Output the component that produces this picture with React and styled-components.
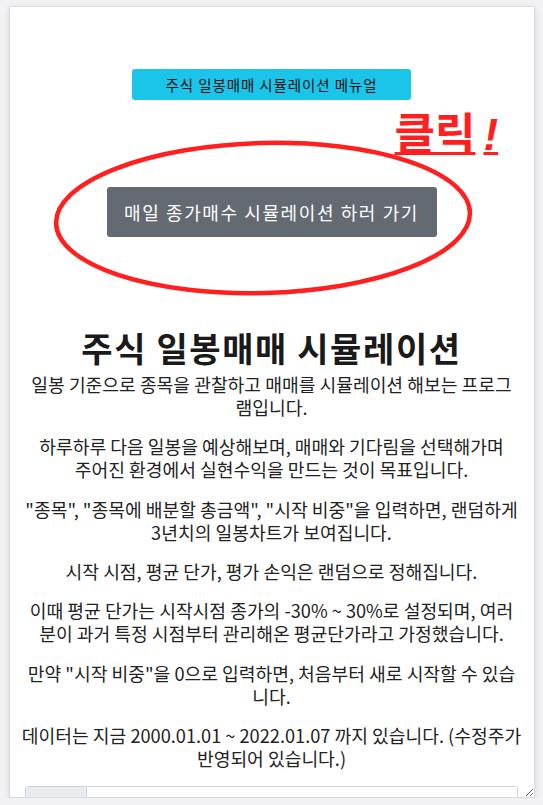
import React from "react";
import styled, { createGlobalStyle } from "styled-components";

const GlobalStyle = createGlobalStyle`
  html, body {
    margin: 0;
    padding: 0;
    background: #f2f2f4;
  }
  body {
    font-family: "Noto Sans CJK KR", "Noto Sans", sans-serif;
    color: #212529;
  }
  * {
    box-sizing: border-box;
  }
`;

const Page = styled.div`
  padding: 6px 8px 0 8px;
`;

const Card = styled.div`
  position: relative;
  width: 526px;
  height: 792px;
  margin: 0 auto;
  background: #ffffff;
  border: 1px solid #dadada;
  box-shadow: 0 2px 6px rgba(0, 0, 0, 0.12);
  padding: 0 15px;
  overflow: hidden;
  resize: both;
`;

const Hero = styled.div`
  display: flex;
  flex-direction: column;
  align-items: center;
  padding-top: 62px;
`;

const MenuButton = styled.button`
  width: 279px;
  height: 31px;
  padding: 0;
  border: none;
  border-radius: 3px;
  background: #1bc5ea;
  color: #111;
  font-family: inherit;
  font-size: 14.5px;
  letter-spacing: 0.9px;
  cursor: pointer;
`;

const SimButton = styled.button`
  margin-top: 87px;
  width: 330px;
  height: 50px;
  padding: 0;
  border: none;
  border-radius: 3px;
  background: #636a72;
  color: #ffffff;
  font-family: inherit;
  font-size: 18px;
  letter-spacing: 1.6px;
  cursor: pointer;
`;

const Ellipse = styled.svg`
  position: absolute;
  left: 30px;
  top: 123px;
  pointer-events: none;
`;

const ClickLabel = styled.div`
  position: absolute;
  left: 385px;
  top: 98px;
  color: #ff1f1f;
  font-size: 44px;
  font-weight: 700;
  line-height: 1.2;
  text-decoration: underline;
  text-decoration-thickness: 3px;
  text-underline-offset: 2px;

  em {
    font-family: "Liberation Sans", sans-serif;
    font-style: italic;
    font-weight: 700;
    margin-left: 8px;
  }
`;

const Title = styled.h1`
  margin: 91px 0 4px 0;
  text-align: center;
  font-size: 34px;
  font-weight: 700;
  line-height: 1.2;
  letter-spacing: 1.6px;
  color: #1a1a1a;
`;

const Paragraph = styled.p`
  margin: 0 0 16px 0;
  display: flex;
  flex-direction: column;
  align-items: center;
  font-size: 18.2px;
  line-height: 23.2px;
  color: #222;
`;

const Line = styled.span`
  white-space: nowrap;
`;

const InputGroup = styled.div`
  display: flex;
  height: 38px;
  border: 1px solid #ced4da;
  border-radius: 3px;
  overflow: hidden;
  margin-right: 1px;
`;

const Addon = styled.span`
  width: 61px;
  display: flex;
  align-items: center;
  justify-content: center;
  background: #e9ecef;
  border-right: 1px solid #ced4da;
  font-size: 15px;
  color: #333;
`;

const Input = styled.input`
  flex: 1;
  border: none;
  padding: 0 12px;
  font-family: inherit;
  font-size: 15px;
  outline: none;
  &::placeholder {
    color: #777;
  }
`;

// each paragraph wraps where the original page wraps
const paragraphs = [
  ["일봉 기준으로 종목을 관찰하고 매매를 시뮬레이션 해보는 프로그", "램입니다."],
  ["하루하루 다음 일봉을 예상해보며, 매매와 기다림을 선택해가며", "주어진 환경에서 실현수익을 만드는 것이 목표입니다."],
  ["\"종목\", \"종목에 배분할 총금액\", \"시작 비중\"을 입력하면, 랜덤하게", "3년치의 일봉차트가 보여집니다."],
  ["시작 시점, 평균 단가, 평가 손익은 랜덤으로 정해집니다."],
  ["이때 평균 단가는 시작시점 종가의 -30% ~ 30%로 설정되며, 여러", "분이 과거 특정 시점부터 관리해온 평균단가라고 가정했습니다."],
  ["만약 \"시작 비중\"을 0으로 입력하면, 처음부터 새로 시작할 수 있습", "니다."],
  ["데이터는 지금 2000.01.01 ~ 2022.01.07 까지 있습니다. (수정주가", "반영되어 있습니다.)"],
];

const App = () => {
  return (
    <>
      <GlobalStyle />
      <Page>
        <Card>
          <Hero>
            <MenuButton>주식 일봉매매 시뮬레이션 메뉴얼</MenuButton>
            <SimButton>매일 종가매수 시뮬레이션 하러 가기</SimButton>
          </Hero>

          {/* red annotation drawn over the button */}
          <Ellipse width="460" height="180" viewBox="0 0 460 180">
            <ellipse
              cx="223"
              cy="88"
              rx="207"
              ry="75"
              fill="none"
              stroke="#ff1f1f"
              strokeWidth="4.5"
              transform="rotate(-1.5 223 88)"
            />
          </Ellipse>
          <ClickLabel>
            클릭<em>!</em>
          </ClickLabel>

          <Title>주식 일봉매매 시뮬레이션</Title>
          {paragraphs.map((lines, i) => (
            <Paragraph key={i}>
              {lines.map((line, j) => (
                <Line key={j}>{line}</Line>
              ))}
            </Paragraph>
          ))}

          <InputGroup>
            <Addon>종목</Addon>
            <Input placeholder="예) 삼성전자" />
          </InputGroup>
        </Card>
      </Page>
    </>
  );
};

export default App;
